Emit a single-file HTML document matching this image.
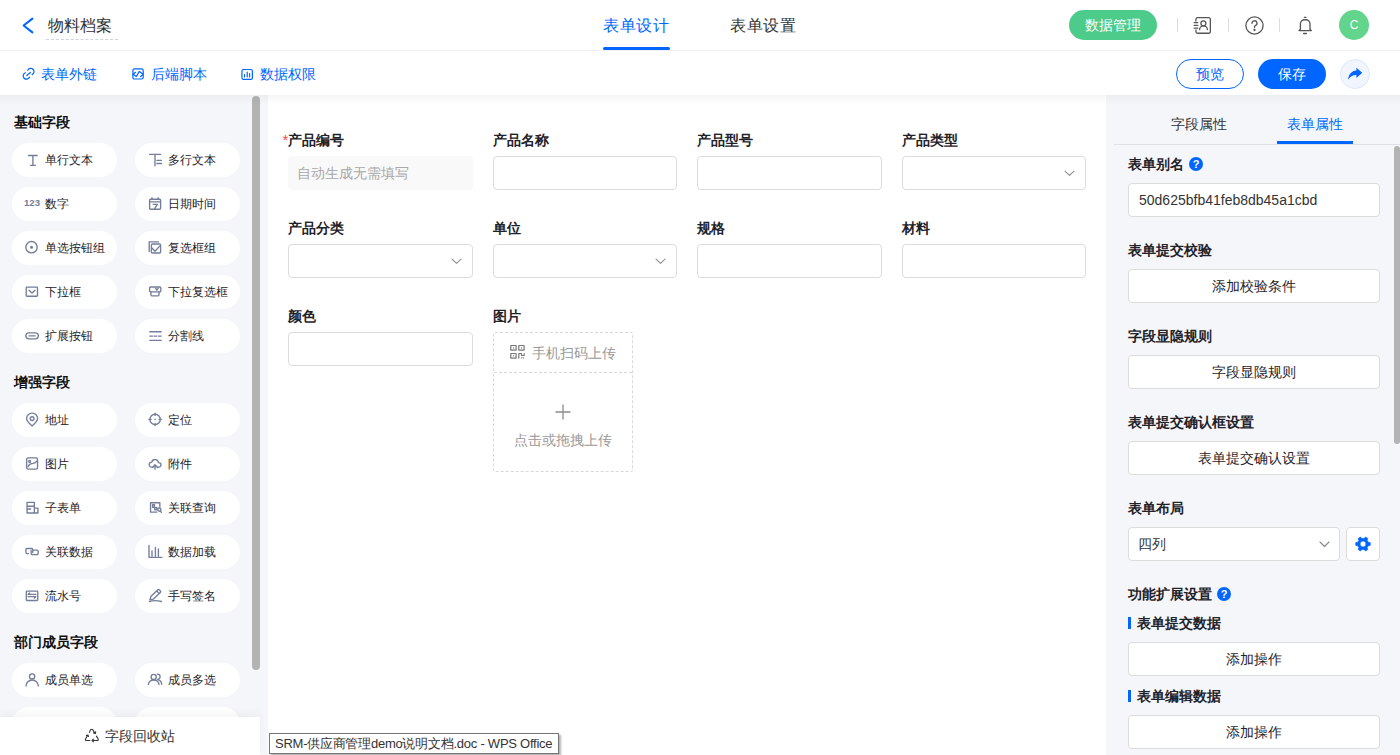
<!DOCTYPE html>
<html><head><meta charset="utf-8">
<style>
*{margin:0;padding:0;box-sizing:border-box}
html,body{width:1400px;height:755px;overflow:hidden;background:#fff;font-family:"Liberation Sans",sans-serif;color:#1f2329}
.abs{position:absolute}
svg{display:block}
#hdr{position:absolute;left:0;top:0;width:1400px;height:51px;background:#fff;border-bottom:1px solid #f0f0f0}
#tool{position:absolute;left:0;top:51px;width:1400px;height:44px;background:#fff}
.t16{font-size:16px;line-height:20px;white-space:nowrap}
.t14{font-size:14px;line-height:18px;white-space:nowrap}
.blue{color:#0066ff}
#left{position:absolute;left:0;top:95px;width:268px;height:660px;background:#f5f6fa}
.sec{position:absolute;left:14px;font-size:14px;font-weight:bold;line-height:18px;color:#111;white-space:nowrap}
.pill{position:absolute;width:105px;height:34px;border-radius:17px;background:#fff}
.pill .tx{position:absolute;left:33px;top:9px;font-size:12px;line-height:16px;color:#1f2329;white-space:nowrap}
#center{position:absolute;left:268px;top:95px;width:838px;height:660px;background:#fff}
.lbl{position:absolute;font-size:14px;font-weight:bold;line-height:18px;color:#1f2329;white-space:nowrap}
.inp{position:absolute;height:34px;border:1px solid #dcdcdc;border-radius:4px;background:#fff}
#right{position:absolute;left:1106px;top:95px;width:294px;height:660px;background:#f5f6fa}
.rl{position:absolute;left:22px;font-size:14px;font-weight:bold;line-height:18px;color:#1f2329;white-space:nowrap}
.rb{position:absolute;left:22px;width:252px;height:34px;border:1px solid #dcdcdc;border-radius:4px;background:#fff;font-size:14px;line-height:32px;text-align:center;color:#1f2329;white-space:nowrap}
#shadow{position:absolute;left:0;top:95px;width:1400px;height:10px;background:linear-gradient(rgba(0,0,0,0.035),rgba(0,0,0,0))}
#tip{position:absolute;left:269px;top:733px;height:21px;padding:0 6px 0 5px;border:1px solid #767676;background:#fff;font-size:13px;letter-spacing:-0.25px;line-height:19px;color:#333;box-shadow:2px 2px 2px rgba(0,0,0,0.3);white-space:nowrap}
</style></head><body>

<div id="hdr">
  <svg class="abs" style="left:20px;top:15px" width="18" height="22" viewBox="0 0 18 22"><path d="M12.4 3.6 L3.6 10.5 L12.4 17.4" fill="none" stroke="#0066ff" stroke-width="2" stroke-linecap="round" stroke-linejoin="round"/></svg>
  <div class="abs t16" style="left:48px;top:16px;color:#333">物料档案</div>
  <div class="abs" style="left:46px;top:39px;width:72px;border-top:1px dashed #d0d3d9"></div>
  <div class="abs t16 blue" style="left:603px;top:16px;letter-spacing:0.7px">表单设计</div>
  <div class="abs" style="left:603px;top:47px;width:67px;height:3px;background:#0066ff;border-radius:2px"></div>
  <div class="abs t16" style="left:730px;top:16px;color:#333;letter-spacing:0.6px">表单设置</div>
  <div class="abs" style="left:1069px;top:10px;width:88px;height:30px;border-radius:15px;background:#4ccb8a;color:#fff;font-size:14px;line-height:30px;text-align:center">数据管理</div>
  <div class="abs" style="left:1177px;top:18px;width:1px;height:14px;background:#dcdcdc"></div>
  <div class="abs" style="left:1228px;top:18px;width:1px;height:14px;background:#dcdcdc"></div>
  <div class="abs" style="left:1279px;top:18px;width:1px;height:14px;background:#dcdcdc"></div>
  <svg class="abs" style="left:1193px;top:16px" width="19" height="19" viewBox="0 0 19 19" fill="none" stroke="#555" stroke-width="1.3" stroke-linecap="round" stroke-linejoin="round"><path d="M2.95 5V3.15A1.5 1.5 0 0 1 4.45 1.65H15.85A1.5 1.5 0 0 1 17.35 3.15V15.75A1.5 1.5 0 0 1 15.85 17.25H4.45A1.5 1.5 0 0 1 2.95 15.75V13.9M1.2 6.6H4.8M1.2 9.4H4.8M1.2 12.2H4.8"/><circle cx="10.4" cy="7.3" r="2.5"/><path d="M6.6 13.6A3.9 3.8 0 0 1 14.4 13.6"/></svg>
  <svg class="abs" style="left:1245px;top:16px" width="19" height="19" viewBox="0 0 19 19" fill="none" stroke="#555" stroke-width="1.3" stroke-linecap="round"><circle cx="9.5" cy="9.5" r="8.6"/><path d="M7 7.3A2.5 2.5 0 1 1 10.4 9.6C9.8 9.9 9.5 10.4 9.5 11.1V11.6"/><circle cx="9.5" cy="14" r="0.5" fill="#555"/></svg>
  <svg class="abs" style="left:1296px;top:15px" width="19" height="20" viewBox="0 0 19 20" fill="none" stroke="#555" stroke-width="1.3" stroke-linecap="round" stroke-linejoin="round"><path d="M8.3 2.3H10M3.1 15.6L4.4 14.4V8.9A4.2 4.2 0 0 1 8.6 4.75H9.8A4.2 4.2 0 0 1 14 8.9V14.4L15.3 15.6ZM7.6 18.5H10.4"/></svg>
  <div class="abs" style="left:1339px;top:10px;width:30px;height:30px;border-radius:50%;background:#62d48b;color:#fff;font-size:12px;line-height:30px;text-align:center">C</div>
</div>

<div id="tool">
  <svg class="abs" style="left:22px;top:67px;top:16px" width="14" height="14" viewBox="0 0 14 14" fill="none" stroke="#0066ff" stroke-width="1.2" stroke-linecap="round"><path d="M5.71 3.21A3.3 3.3 0 1 1 10.09 7.59M3.37 5.8A3.3 3.3 0 1 0 7.58 10.08M4.8 8.5L8.4 5.5"/></svg>
  <div class="abs t14 blue" style="left:41px;top:14px">表单外链</div>
  <svg class="abs" style="left:132px;top:16px" width="13" height="14" viewBox="0 0 13 14" fill="none" stroke="#0066ff" stroke-width="1.2" stroke-linecap="round" stroke-linejoin="round"><rect x="0.9" y="1.9" width="10.3" height="10.1" rx="1.5"/><path d="M3.5 5.3L1.1 7.2L4.4 9.5L7.3 4.4L11.2 7.2L8.6 9.5"/></svg>
  <div class="abs t14 blue" style="left:151px;top:14px">后端脚本</div>
  <svg class="abs" style="left:241px;top:16px" width="13" height="14" viewBox="0 0 13 14" fill="none" stroke="#0066ff" stroke-width="1.2" stroke-linecap="round" stroke-linejoin="round"><rect x="0.95" y="2.5" width="10.45" height="9.8" rx="1.6"/><path d="M3.5 7.6V9.8M6.2 5.1V9.8M8.6 6.6V9.8"/></svg>
  <div class="abs t14 blue" style="left:260px;top:14px">数据权限</div>
  <div class="abs" style="left:1176px;top:8px;width:68px;height:30px;border:1px solid #0066ff;border-radius:15px;color:#0066ff;font-size:14px;line-height:28px;text-align:center">预览</div>
  <div class="abs" style="left:1258px;top:8px;width:68px;height:30px;border-radius:15px;background:#0066ff;color:#fff;font-size:14px;line-height:30px;text-align:center">保存</div>
  <div class="abs" style="left:1340px;top:8px;width:30px;height:30px;border-radius:50%;background:#f1f5ff;border:1px solid #dde7fb"><svg class="abs" style="left:7px;top:6px" width="16" height="16" viewBox="0 0 16 16"><path fill="#0066ff" d="M8.4 1.8L14.2 6.8L8.4 11.9V8.9C4.6 8.8 2 10.4 0.1 13.7C0.6 8.2 3.6 4.8 8.4 4.4Z"/></svg></div>
</div>

<div id="left">
<div class="sec" style="top:18px">基础字段</div>
<div class="pill" style="left:12px;top:48px"><svg class="abs" style="left:13px;top:9px;overflow:visible" width="16" height="16" viewBox="0 0 16 16" fill="none" stroke="#747d99" stroke-width="1.35" stroke-linecap="round" stroke-linejoin="round"><path d="M3.5 3.5H12.2M7.9 3.5V13.4M5.6 13.4H10.3"/></svg><div class="tx">单行文本</div></div>
<div class="pill" style="left:135px;top:48px"><svg class="abs" style="left:13px;top:9px;overflow:visible" width="16" height="16" viewBox="0 0 16 16" fill="none" stroke="#747d99" stroke-width="1.35" stroke-linecap="round" stroke-linejoin="round"><path d="M1.5 2.3H12.6M7 2.3V13.8M8.9 8.3H13.5M8.9 11.5H13.5"/></svg><div class="tx">多行文本</div></div>
<div class="pill" style="left:12px;top:92px"><div class="abs" style="left:12px;top:10px;font-size:9.6px;font-weight:bold;line-height:12px;color:#747d99">123</div><div class="tx">数字</div></div>
<div class="pill" style="left:135px;top:92px"><svg class="abs" style="left:13px;top:9px;overflow:visible" width="16" height="16" viewBox="0 0 16 16" fill="none" stroke="#747d99" stroke-width="1.35" stroke-linecap="round" stroke-linejoin="round"><rect x="1.6" y="3.2" width="11" height="10" rx="1"/><path d="M1.6 5.8H12.6M4 1.6V3.6M10.2 1.6V3.6M5.2 8.3H9.3L6.6 12.6"/></svg><div class="tx">日期时间</div></div>
<div class="pill" style="left:12px;top:136px"><svg class="abs" style="left:13px;top:9px;overflow:visible" width="16" height="16" viewBox="0 0 16 16" fill="none" stroke="#747d99" stroke-width="1.35" stroke-linecap="round" stroke-linejoin="round"><circle cx="6.5" cy="7.2" r="5.7"/><circle cx="6.5" cy="7.2" r="1.5" fill="#747d99" stroke="none"/></svg><div class="tx">单选按钮组</div></div>
<div class="pill" style="left:135px;top:136px"><svg class="abs" style="left:13px;top:9px;overflow:visible" width="16" height="16" viewBox="0 0 16 16" fill="none" stroke="#747d99" stroke-width="1.35" stroke-linecap="round" stroke-linejoin="round"><path d="M1.2 11.5V1.9H10.4"/><rect x="3.4" y="4" width="9.2" height="9" rx="1"/><path d="M4.2 8.3L7 11.2L11.6 6.1"/></svg><div class="tx">复选框组</div></div>
<div class="pill" style="left:12px;top:180px"><svg class="abs" style="left:13px;top:9px;overflow:visible" width="16" height="16" viewBox="0 0 16 16" fill="none" stroke="#747d99" stroke-width="1.35" stroke-linecap="round" stroke-linejoin="round"><rect x="1.2" y="3.1" width="11.3" height="9.1" rx="0.8"/><path d="M4 6.3L7 9L10 6.3"/></svg><div class="tx">下拉框</div></div>
<div class="pill" style="left:135px;top:180px"><svg class="abs" style="left:13px;top:9px;overflow:visible" width="16" height="16" viewBox="0 0 16 16" fill="none" stroke="#747d99" stroke-width="1.35" stroke-linecap="round" stroke-linejoin="round"><rect x="1.6" y="3" width="11.2" height="4.9" rx="1"/><path d="M2.9 7.9V10.8A1 1 0 0 0 3.9 11.8H10A1 1 0 0 0 11 10.8V7.9M7.6 4.2L8.9 6.2L10.3 4.2"/></svg><div class="tx">下拉复选框</div></div>
<div class="pill" style="left:12px;top:224px"><svg class="abs" style="left:13px;top:9px;overflow:visible" width="16" height="16" viewBox="0 0 16 16" fill="none" stroke="#747d99" stroke-width="1.35" stroke-linecap="round" stroke-linejoin="round"><rect x="0.85" y="4.85" width="12.5" height="6" rx="3"/><path d="M4 7.85H10.2"/></svg><div class="tx">扩展按钮</div></div>
<div class="pill" style="left:135px;top:224px"><svg class="abs" style="left:13px;top:9px;overflow:visible" width="16" height="16" viewBox="0 0 16 16" fill="none" stroke="#747d99" stroke-width="1.35" stroke-linecap="round" stroke-linejoin="round"><path d="M1.8 3.7H13.2M1.8 12.4H13.2M1.8 8.1H4.5M6.1 8.1H8.6M10.3 8.1H13.2"/></svg><div class="tx">分割线</div></div>
<div class="sec" style="top:278px">增强字段</div>
<div class="pill" style="left:12px;top:308px"><svg class="abs" style="left:13px;top:9px;overflow:visible" width="16" height="16" viewBox="0 0 16 16" fill="none" stroke="#747d99" stroke-width="1.35" stroke-linecap="round" stroke-linejoin="round"><path d="M7.1 14C7.1 14 1.6 9.4 1.6 6.6A5.5 5.5 0 0 1 12.6 6.6C12.6 9.4 7.1 14 7.1 14Z"/><circle cx="7.1" cy="6.6" r="1.9"/></svg><div class="tx">地址</div></div>
<div class="pill" style="left:135px;top:308px"><svg class="abs" style="left:13px;top:9px;overflow:visible" width="16" height="16" viewBox="0 0 16 16" fill="none" stroke="#747d99" stroke-width="1.35" stroke-linecap="round" stroke-linejoin="round"><circle cx="7.1" cy="7.4" r="5.2"/><rect x="6.4" y="6.7" width="1.4" height="1.4" fill="#747d99" stroke="none"/><path d="M7.1 1.2V3.4M7.1 11.4V13.6M0.9 7.4H3.1M11.1 7.4H13.3"/></svg><div class="tx">定位</div></div>
<div class="pill" style="left:12px;top:352px"><svg class="abs" style="left:13px;top:9px;overflow:visible" width="16" height="16" viewBox="0 0 16 16" fill="none" stroke="#747d99" stroke-width="1.35" stroke-linecap="round" stroke-linejoin="round"><rect x="1.65" y="1.85" width="10.9" height="11.3" rx="1.6"/><circle cx="4.6" cy="5.4" r="0.9"/><path d="M3 10.8C4 8.2 5.4 7.6 8 7.4C10 7.2 11 6.6 11.8 5.2"/></svg><div class="tx">图片</div></div>
<div class="pill" style="left:135px;top:352px"><svg class="abs" style="left:13px;top:9px;overflow:visible" width="16" height="16" viewBox="0 0 16 16" fill="none" stroke="#747d99" stroke-width="1.35" stroke-linecap="round" stroke-linejoin="round"><path d="M5.2 11.2H3.6A2.5 2.5 0 0 1 3.8 6.2A3.4 3.4 0 0 1 10.5 6.6A2.3 2.3 0 0 1 10.8 11.2H9M7 8.8V13.3M4.8 10.9L7 8.7L9.2 10.9"/></svg><div class="tx">附件</div></div>
<div class="pill" style="left:12px;top:396px"><svg class="abs" style="left:13px;top:9px;overflow:visible" width="16" height="16" viewBox="0 0 16 16" fill="none" stroke="#747d99" stroke-width="1.35" stroke-linecap="round" stroke-linejoin="round"><path d="M2.05 2.35H9.35V12.95H2.05ZM2.05 6.2H9.35M2.05 9H5.7M9.35 8.15H12.95V12.95H9.35"/></svg><div class="tx">子表单</div></div>
<div class="pill" style="left:135px;top:396px"><svg class="abs" style="left:13px;top:9px;overflow:visible" width="16" height="16" viewBox="0 0 16 16" fill="none" stroke="#747d99" stroke-width="1.35" stroke-linecap="round" stroke-linejoin="round"><path d="M11.85 6.7V2.75H2.55V12.15H8.7"/><rect x="4.6" y="4.7" width="1.9" height="2.5"/><rect x="6.8" y="7.6" width="2.1" height="2.3"/><circle cx="11.3" cy="9.6" r="1.6"/><path d="M12.5 10.9L13.4 12.4"/></svg><div class="tx">关联查询</div></div>
<div class="pill" style="left:12px;top:440px"><svg class="abs" style="left:13px;top:9px;overflow:visible" width="16" height="16" viewBox="0 0 16 16" fill="none" stroke="#747d99" stroke-width="1.35" stroke-linecap="round" stroke-linejoin="round"><path d="M3.6 9.55H2.15A1.2 1.2 0 0 1 0.95 8.35V5.65A1.2 1.2 0 0 1 2.15 4.45H6.55A1.2 1.2 0 0 1 7.75 5.65V8.6M8.7 6.05H11.95A1.2 1.2 0 0 1 13.15 7.25V9.35A1.2 1.2 0 0 1 11.95 10.55H7.35A1.2 1.2 0 0 1 6.15 9.35V6.5"/></svg><div class="tx">关联数据</div></div>
<div class="pill" style="left:135px;top:440px"><svg class="abs" style="left:13px;top:9px;overflow:visible" width="16" height="16" viewBox="0 0 16 16" fill="none" stroke="#747d99" stroke-width="1.35" stroke-linecap="round" stroke-linejoin="round"><path d="M1 1.5V13.3H13.9M4 6.9V12M7.4 3.4V12M10.4 4.9V12"/></svg><div class="tx">数据加载</div></div>
<div class="pill" style="left:12px;top:484px"><svg class="abs" style="left:13px;top:9px;overflow:visible" width="16" height="16" viewBox="0 0 16 16" fill="none" stroke="#747d99" stroke-width="1.35" stroke-linecap="round" stroke-linejoin="round"><rect x="1.35" y="3.05" width="11.4" height="9.4" rx="0.8"/><path d="M3.1 6.4H10.8M3.1 6.4L4.6 5M10.8 8.6H3.1M10.8 8.6L9.3 10"/></svg><div class="tx">流水号</div></div>
<div class="pill" style="left:135px;top:484px"><svg class="abs" style="left:13px;top:9px;overflow:visible" width="16" height="16" viewBox="0 0 16 16" fill="none" stroke="#747d99" stroke-width="1.35" stroke-linecap="round" stroke-linejoin="round"><path d="M2 11.6L2.8 8.6L9.6 1.9A1.3 1.3 0 0 1 11.4 1.9L12.3 2.8A1.3 1.3 0 0 1 12.3 4.6L5.5 11.1ZM9 3.3L10.9 5.2M1.5 13.5C5 12.3 9 12.3 13.5 13.5"/></svg><div class="tx">手写签名</div></div>
<div class="sec" style="top:538px">部门成员字段</div>
<div class="pill" style="left:12px;top:568px"><svg class="abs" style="left:13px;top:9px;overflow:visible" width="16" height="16" viewBox="0 0 16 16" fill="none" stroke="#747d99" stroke-width="1.35" stroke-linecap="round" stroke-linejoin="round"><circle cx="7.1" cy="4.4" r="2.6"/><path d="M1 13.9A6.1 5.9 0 0 1 13.3 13.9"/></svg><div class="tx">成员单选</div></div>
<div class="pill" style="left:135px;top:568px"><svg class="abs" style="left:13px;top:9px;overflow:visible" width="16" height="16" viewBox="0 0 16 16" fill="none" stroke="#747d99" stroke-width="1.35" stroke-linecap="round" stroke-linejoin="round"><circle cx="5.7" cy="4.9" r="2.6"/><path d="M0.4 12.4A5.3 4.4 0 0 1 11 12.4M9.4 2.2A2.6 2.6 0 0 1 9.6 7.4M10.4 7.9A5 4.6 0 0 1 13.6 12.4"/></svg><div class="tx">成员多选</div></div>
<div class="pill" style="left:12px;top:612px"></div><div class="pill" style="left:135px;top:612px"></div>
<div class="abs" style="left:252px;top:1px;width:8px;height:574px;border-radius:4px;background:#b3b3b3"></div>
<div class="abs" style="left:0;top:622px;width:260px;height:38px;background:#fff;box-shadow:0 -4px 8px rgba(0,0,0,0.04)"><svg class="abs" style="left:84px;top:9px" width="17" height="17" viewBox="0 0 17 17" fill="none" stroke="#333" stroke-width="1.1" stroke-linecap="round" stroke-linejoin="round"><path d="M5.4 6.4L6.6 3.6Q7.6 2.8 8.7 3.6L10.6 6.8M9.5 6.9L11.3 7.6L11.7 5.7M12.4 10.1L14.2 13Q14.5 14.5 13.2 14.5H8.1M9.4 13.2L8.1 14.5L9.4 15.8M5.9 14.5H2.4Q1.1 14.5 1.5 13L3.9 9M2.4 9.6L3.9 9L4.5 10.5"/></svg><div class="abs" style="left:105px;top:10px;font-size:14px;line-height:18px;color:#333">字段回收站</div></div>
</div>
<div id="center">
<div class="lbl" style="left:14.5px;top:36px"><span style="color:#f5483b;font-weight:normal;font-size:15px;position:relative;top:0px">*</span>产品编号</div>
<div class="abs" style="left:20px;top:61px;width:184.5px;height:34px;border-radius:4px;background:#f9f9f9;font-size:14px;line-height:34px;padding-left:9px;color:#a8a8a8">自动生成无需填写</div>
<div class="lbl" style="left:224.5px;top:36px">产品名称</div>
<div class="inp" style="left:224.5px;top:61px;width:184.5px"></div>
<div class="lbl" style="left:429px;top:36px">产品型号</div>
<div class="inp" style="left:429px;top:61px;width:184.5px"></div>
<div class="lbl" style="left:633.5px;top:36px">产品类型</div>
<div class="inp" style="left:633.5px;top:61px;width:184.5px"><svg class="abs" style="right:10px;top:13px" width="11" height="7" viewBox="0 0 11 7" fill="none" stroke="#909090" stroke-width="1.1" stroke-linecap="round" stroke-linejoin="round"><path d="M1 1.2L5.5 5.4L10 1.2"/></svg></div>
<div class="lbl" style="left:20px;top:124px">产品分类</div>
<div class="inp" style="left:20px;top:149px;width:184.5px"><svg class="abs" style="right:10px;top:13px" width="11" height="7" viewBox="0 0 11 7" fill="none" stroke="#909090" stroke-width="1.1" stroke-linecap="round" stroke-linejoin="round"><path d="M1 1.2L5.5 5.4L10 1.2"/></svg></div>
<div class="lbl" style="left:224.5px;top:124px">单位</div>
<div class="inp" style="left:224.5px;top:149px;width:184.5px"><svg class="abs" style="right:10px;top:13px" width="11" height="7" viewBox="0 0 11 7" fill="none" stroke="#909090" stroke-width="1.1" stroke-linecap="round" stroke-linejoin="round"><path d="M1 1.2L5.5 5.4L10 1.2"/></svg></div>
<div class="lbl" style="left:429px;top:124px">规格</div>
<div class="inp" style="left:429px;top:149px;width:184.5px"></div>
<div class="lbl" style="left:633.5px;top:124px">材料</div>
<div class="inp" style="left:633.5px;top:149px;width:184.5px"></div>
<div class="lbl" style="left:20px;top:212px">颜色</div>
<div class="inp" style="left:20px;top:237px;width:184.5px"></div>
<div class="lbl" style="left:224.5px;top:212px">图片</div>
<div class="abs" style="left:225px;top:237px;width:140px;height:140px;border:1px dashed #d9d9d9;border-radius:2px"></div>
<div class="abs" style="left:226px;top:277px;width:138px;border-top:1px dashed #d9d9d9"></div>
<svg class="abs" style="left:241px;top:249px" width="17" height="16" viewBox="0 0 17 16" fill="none" stroke="#777" stroke-width="1.2" stroke-linejoin="round"><rect x="1.8" y="1.5" width="5.3" height="4.6"/><rect x="9.8" y="1.5" width="5.3" height="4.6"/><rect x="1.8" y="9.5" width="5.3" height="4.6"/><path d="M9.8 14.6V9.5H12.5V11.5H15.2V9.3"/><g fill="#777" stroke="none"><rect x="3.9" y="3.3" width="1.2" height="1.2"/><rect x="11.9" y="3.3" width="1.2" height="1.2"/><rect x="3.9" y="11.2" width="1.2" height="1.2"/><rect x="12" y="13.3" width="1.2" height="1.2"/><rect x="13.9" y="13.3" width="1.2" height="1.2"/></g></svg>
<div class="abs" style="left:264px;top:249px;font-size:14px;line-height:18px;color:#999">手机扫码上传</div>
<svg class="abs" style="left:287px;top:309px" width="16" height="16" viewBox="0 0 16 16" fill="none" stroke="#8c8c8c" stroke-width="1.3"><path d="M8 0.5V15.5M0.5 8H15.5"/></svg>
<div class="abs" style="left:246px;top:336px;font-size:14px;line-height:18px;color:#999">点击或拖拽上传</div>
</div>
<div id="right">
<div class="abs t14" style="left:65px;top:20px;color:#333">字段属性</div>
<div class="abs t14 blue" style="left:181px;top:20px">表单属性</div>
<div class="abs" style="left:8px;top:49px;width:286px;height:1px;background:#dfe1e6"></div>
<div class="abs" style="left:171px;top:46px;width:76px;height:3px;background:#0066ff"></div>
<div class="abs" style="left:288px;top:51px;width:6px;height:298px;border-radius:3px;background:#b3b3b3"></div>
<div class="rl" style="top:60px">表单别名</div><svg class="abs" style="left:83px;top:62px" width="14" height="14" viewBox="0 0 14 14"><circle cx="7" cy="7" r="7" fill="#0066ff"/><text x="7" y="11" text-anchor="middle" font-family="Liberation Sans" font-weight="bold" font-size="11" fill="#fff">?</text></svg>
<div class="rb" style="top:88px;text-align:left;padding-left:10px;color:#333">50d625bfb41feb8db45a1cbd</div>
<div class="rl" style="top:146px">表单提交校验</div>
<div class="rb" style="top:174px">添加校验条件</div>
<div class="rl" style="top:232px">字段显隐规则</div>
<div class="rb" style="top:260px">字段显隐规则</div>
<div class="rl" style="top:318px">表单提交确认框设置</div>
<div class="rb" style="top:346px">表单提交确认设置</div>
<div class="rl" style="top:404px">表单布局</div>
<div class="rb" style="top:432px;width:212px;text-align:left;padding-left:9px;color:#333">四列<svg class="abs" style="right:9px;top:13px" width="11" height="7" viewBox="0 0 11 7" fill="none" stroke="#8c8c8c" stroke-width="1.2" stroke-linecap="round" stroke-linejoin="round"><path d="M1 1L5.5 5.5L10 1"/></svg></div>
<div class="rb" style="left:240px;top:432px;width:34px"><svg class="abs" style="left:8px;top:7.5px" width="16" height="16" viewBox="0 0 16 16"><path fill="#0066ff" fill-rule="evenodd" stroke="#0066ff" stroke-width="0.6" stroke-linejoin="round" d="M12.76 5.25 L13.20 6.21 L15.26 6.59 L15.26 9.41 L13.20 9.79 L12.76 10.75 L12.15 11.61 L12.85 13.58 L10.41 15.00 L9.05 13.40 L8.00 13.50 L6.95 13.40 L5.59 15.00 L3.15 13.58 L3.85 11.61 L3.24 10.75 L2.80 9.79 L0.74 9.41 L0.74 6.59 L2.80 6.21 L3.24 5.25 L3.85 4.39 L3.15 2.42 L5.59 1.00 L6.95 2.60 L8.00 2.50 L9.05 2.60 L10.41 1.00 L12.85 2.42 L12.15 4.39ZM10.90 8A2.9 2.9 0 1 0 5.10 8A2.9 2.9 0 1 0 10.90 8Z"/></svg></div>
<div class="rl" style="top:490px">功能扩展设置</div><svg class="abs" style="left:111px;top:492px" width="14" height="14" viewBox="0 0 14 14"><circle cx="7" cy="7" r="7" fill="#0066ff"/><text x="7" y="11" text-anchor="middle" font-family="Liberation Sans" font-weight="bold" font-size="11" fill="#fff">?</text></svg>
<div class="abs" style="left:22px;top:522px;width:3px;height:12px;background:#0066ff"></div>
<div class="rl" style="left:31px;top:519px">表单提交数据</div>
<div class="rb" style="top:547px">添加操作</div>
<div class="abs" style="left:22px;top:595px;width:3px;height:12px;background:#0066ff"></div>
<div class="rl" style="left:31px;top:592px">表单编辑数据</div>
<div class="rb" style="top:620px">添加操作</div>
</div>
<div id="shadow"></div>
<div id="tip">SRM-供应商管理demo说明文档.doc - WPS Office</div>
</body></html>
